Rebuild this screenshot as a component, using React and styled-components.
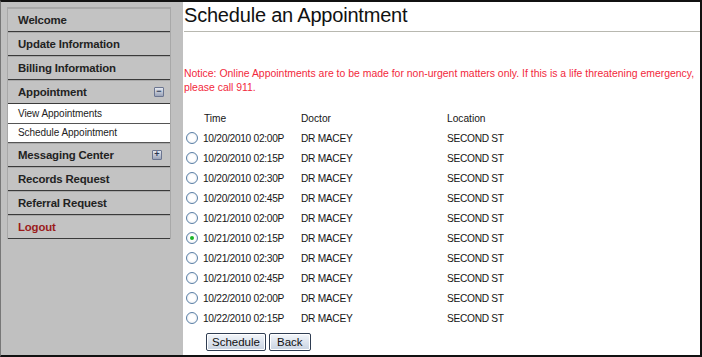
import React from 'react';
import styled, { createGlobalStyle } from 'styled-components';

const GlobalStyle = createGlobalStyle`
  html, body {
    margin: 0;
    padding: 0;
    background: #ffffff;
  }
  body {
    font-family: 'Liberation Sans', Arial, sans-serif;
  }
`;

const Frame = styled.div`
  box-sizing: border-box;
  width: 702px;
  height: 357px;
  border-top: 2px solid #111;
  border-right: 2px solid #111;
  border-bottom: 2px solid #111;
  border-left: 1px solid #777;
  display: grid;
  grid-template-columns: 182px 1fr;
  overflow: hidden;
`;

const Sidebar = styled.aside`
  background: #c0c0c0;
  padding: 5px 12px 0 6px;
`;

const Menu = styled.ul`
  list-style: none;
  margin: 0;
  padding: 0;
  border-left: 1px solid #a8a8a8;
  border-right: 1px solid #a8a8a8;
  border-top: 1px solid #a8a8a8;
`;

const MenuItem = styled.li`
  box-sizing: border-box;
  height: ${p => (p.$sub ? '19.5px' : '24px')};
  display: flex;
  align-items: center;
  justify-content: space-between;
  padding: 0 6px 0 10px;
  background: ${p => (p.$sub ? '#ffffff' : '#c3c3c3')};
  border-bottom: 1px solid ${p => (p.$sub ? '#555' : '#3a3a3a')};
  box-shadow: ${p => (p.$sub ? 'none' : 'inset 0 1px 0 #a9a9a9')};
  font-size: ${p => (p.$sub ? '10px' : '11.4px')};
  letter-spacing: ${p => (p.$sub ? '-0.05px' : '-0.15px')};
  font-weight: ${p => (p.$sub ? 'normal' : 'bold')};
  color: ${p => p.$color || '#222'};
`;

const Toggle = styled.span`
  width: 10px;
  height: 10px;
  box-sizing: border-box;
  border: 1px solid #6b7590;
  border-radius: 1px;
  background: linear-gradient(180deg, #e4e8f0, #9aa3b8);
  display: flex;
  align-items: center;
  justify-content: center;
  margin-right: ${p => p.$offset || '0'};
  font-size: 9px;
  letter-spacing: 0;
  line-height: 1;
  font-weight: bold;
  color: #2a3550;
`;

const Main = styled.main`
  padding-left: 1px;
  color: #222;
`;

const Title = styled.h1`
  margin: 0;
  padding: 1px 0 3px 0;
  font-size: 20px;
  letter-spacing: -0.2px;
  font-weight: normal;
  color: #111;
  border-bottom: 1px solid #b8b8b0;
  line-height: 25px;
`;

const Notice = styled.p`
  margin: 35px 0 0 0;
  font-size: 10.45px;
  line-height: 14px;
  color: #f2283c;
`;

const Table = styled.div`
  margin-top: 13px;
  display: grid;
  grid-template-columns: 19px 98px 146px 1fr;
  grid-auto-rows: 20px;
  align-items: center;
  font-size: 10.2px;
  letter-spacing: -0.3px;
  color: #161616;
`;

const HeadCell = styled.div`
  padding-left: ${p => p.$pad || '0'};
  letter-spacing: 0;
`;

const Radio = styled.span`
  box-sizing: border-box;
  width: 12px;
  height: 12px;
  margin-left: 2px;
  border-radius: 50%;
  border: 1px solid #5a7fa6;
  background: radial-gradient(circle, #ffffff 40%, #dfe4ea 100%);
  display: flex;
  align-items: center;
  justify-content: center;

  &::after {
    content: '';
    width: 4px;
    height: 4px;
    border-radius: 50%;
    background: ${p => (p.$checked ? '#1cb52a' : 'transparent')};
  }
`;

const Cell = styled.div`
  white-space: nowrap;
`;

const Buttons = styled.div`
  margin: 5px 0 0 22px;
  display: flex;
  gap: 3px;
`;

const Button = styled.button`
  height: 18px;
  padding: 0 ${p => p.$pad || '5px'};
  font-family: 'Liberation Sans', Arial, sans-serif;
  font-size: 11.5px;
  color: #111;
  border: 1px solid #2f3d52;
  border-radius: 2px;
  background: linear-gradient(180deg, #f4f7fb 0%, #dde4ee 50%, #c9d3e1 100%);
  box-shadow: inset 0 0 0 1px #ffffff;
`;

const menu = [
  { label: 'Welcome' },
  { label: 'Update Information' },
  { label: 'Billing Information' },
  { label: 'Appointment', toggle: '−' },
  { label: 'View Appointments', sub: true },
  { label: 'Schedule Appointment', sub: true },
  { label: 'Messaging Center', toggle: '+', offset: '2px' },
  { label: 'Records Request' },
  { label: 'Referral Request' },
  { label: 'Logout', color: '#9b1b1b' },
];

const slots = [
  '10/20/2010 02:00P',
  '10/20/2010 02:15P',
  '10/20/2010 02:30P',
  '10/20/2010 02:45P',
  '10/21/2010 02:00P',
  '10/21/2010 02:15P',
  '10/21/2010 02:30P',
  '10/21/2010 02:45P',
  '10/22/2010 02:00P',
  '10/22/2010 02:15P',
];

export default function App() {
  return (
    <>
      <GlobalStyle />
      <Frame>
        <Sidebar>
          <Menu>
            {menu.map(item => (
              <MenuItem key={item.label} $sub={item.sub} $color={item.color}>
                <span>{item.label}</span>
                {item.toggle && <Toggle $offset={item.offset}>{item.toggle}</Toggle>}
              </MenuItem>
            ))}
          </Menu>
        </Sidebar>
        <Main>
          <Title>Schedule an Appointment</Title>
          <Notice>
            Notice: Online Appointments are to be made for non-urgent matters only. If this is a life threatening emergency, please call 911.
          </Notice>
          <Table>
            <HeadCell />
            <HeadCell $pad="1px">Time</HeadCell>
            <HeadCell>Doctor</HeadCell>
            <HeadCell>Location</HeadCell>
            {slots.map((time, i) => (
              <React.Fragment key={time}>
                <Radio $checked={i === 5} />
                <Cell>{time}</Cell>
                <Cell>DR MACEY</Cell>
                <Cell>SECOND ST</Cell>
              </React.Fragment>
            ))}
          </Table>
          <Buttons>
            <Button>Schedule</Button>
            <Button $pad="7px">Back</Button>
          </Buttons>
        </Main>
      </Frame>
    </>
  );
}
